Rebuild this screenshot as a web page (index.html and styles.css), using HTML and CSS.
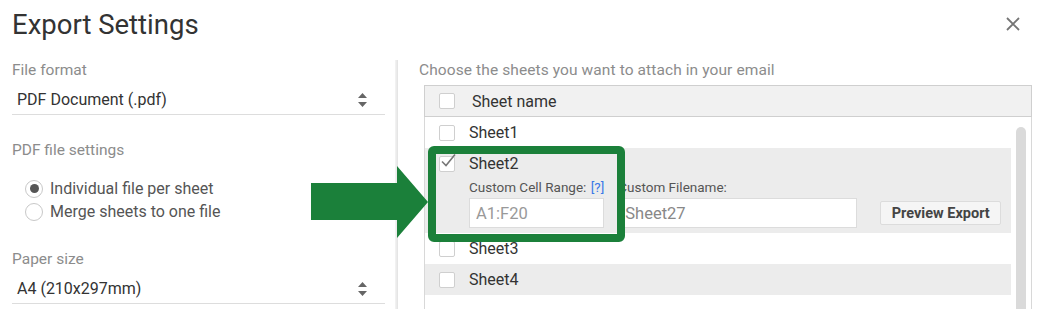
FILE: index.html
```html
<!DOCTYPE html>
<html lang="en">
<head>
    <meta charset="UTF-8">
    <title>Export Settings</title>
    <link rel="stylesheet" href="styles.css">
</head>
<body>
    <div class="dialog">
        <header class="dialog-head">
            <h1>Export Settings</h1>
            <button class="close" aria-label="Close">
                <svg width="14" height="14" viewBox="0 0 14 14"><path d="M1 1L13 13M13 1L1 13" stroke="#757575" stroke-width="1.8" fill="none"/></svg>
            </button>
        </header>

        <div class="dialog-body">
            <section class="settings">
                <div class="label">File format</div>
                <div class="select">
                    <span>PDF Document (.pdf)</span>
                    <svg class="sort" width="9" height="14" viewBox="0 0 9 14"><path d="M4.5 0L9 5H0Z M0 9H9L4.5 14Z" fill="#666"/></svg>
                </div>

                <div class="label label-gap">PDF file settings</div>
                <div class="radios">
                    <label class="radio"><span class="dot checked"></span>Individual file per sheet</label>
                    <label class="radio"><span class="dot"></span>Merge sheets to one file</label>
                </div>

                <div class="label label-paper">Paper size</div>
                <div class="select">
                    <span>A4 (210x297mm)</span>
                    <svg class="sort" width="9" height="14" viewBox="0 0 9 14"><path d="M4.5 0L9 5H0Z M0 9H9L4.5 14Z" fill="#666"/></svg>
                </div>
            </section>

            <div class="divider"></div>

            <section class="sheets">
                <div class="label">Choose the sheets you want to attach in your email</div>
                <div class="table">
                    <div class="table-head">
                        <span class="box"></span>
                        <span class="head-name">Sheet name</span>
                    </div>
                    <div class="table-body">
                        <div class="rows">
                            <div class="row">
                                <span class="box"></span><span class="name">Sheet1</span>
                            </div>
                            <div class="row open">
                                <div class="row-line">
                                    <span class="box">
                                        <svg width="16" height="14" viewBox="0 0 16 14"><path d="M2 7.5L6 11.5L15 0.5" stroke="#777" stroke-width="1.6" fill="none"/></svg>
                                    </span>
                                    <span class="name">Sheet2</span>
                                </div>
                                <div class="fields">
                                    <div class="field">
                                        <div class="field-label">Custom Cell Range: <a class="help">[?]</a></div>
                                        <input class="field-input range" type="text" value="A1:F20">
                                    </div>
                                    <div class="field">
                                        <div class="field-label">Custom Filename:</div>
                                        <input class="field-input filename" type="text" value="Sheet27">
                                    </div>
                                    <button class="preview">Preview Export</button>
                                </div>
                            </div>
                            <div class="row">
                                <span class="box"></span><span class="name">Sheet3</span>
                            </div>
                            <div class="row shaded">
                                <span class="box"></span><span class="name">Sheet4</span>
                            </div>
                        </div>
                        <div class="scroll"><div class="thumb"></div></div>
                    </div>
                </div>
            </section>
        </div>

        <svg class="arrow" width="118" height="72" viewBox="0 0 118 72">
            <path d="M0 17H86V0L117 36L86 72V54H0Z" fill="#1b803a"/>
        </svg>
        <div class="highlight"></div>
    </div>
</body>
</html>
```

FILE: styles.css
```css
* {
    margin: 0;
    padding: 0;
    box-sizing: border-box;
}

body {
    font-family: 'Roboto', 'Liberation Sans', sans-serif;
    background: #fff;
    color: #333;
    width: 1042px;
    height: 309px;
    overflow: hidden;
}

.dialog {
    position: relative;
    height: 309px;
}

.dialog-head {
    height: 60px;
    display: flex;
    justify-content: space-between;
    align-items: flex-start;
    padding: 8px 22px 0 12px;
}

.dialog-head h1 {
    font-size: 27.5px;
    font-weight: 400;
    line-height: 34px;
    color: #333;
}

.close {
    border: none;
    background: none;
    margin-top: 9px;
    width: 14px;
    height: 14px;
}

.close svg {
    display: block;
}

.dialog-body {
    display: flex;
    height: 249px;
    overflow: hidden;
}

.settings {
    width: 373px;
    margin-left: 12px;
}

.label {
    font-size: 15.5px;
    line-height: 20px;
    color: #8c8c8c;
}

.select {
    height: 35px;
    display: flex;
    align-items: center;
    justify-content: space-between;
    padding: 5px 18px 0 5px;
    border-bottom: 1px solid #ddd;
    font-size: 16px;
    color: #333;
}

.label-gap {
    margin-top: 25px;
}

.radios {
    margin-top: 17px;
    padding-left: 13px;
}

.radio {
    display: flex;
    align-items: center;
    height: 23px;
    font-size: 16px;
    color: #555;
}

.dot {
    width: 18px;
    height: 18px;
    border: 1px solid #c8c8c8;
    border-radius: 50%;
    margin-right: 7px;
    display: flex;
    align-items: center;
    justify-content: center;
}

.dot.checked::after {
    content: '';
    width: 9px;
    height: 9px;
    border-radius: 50%;
    background: #555;
}

.label-paper {
    margin-top: 26px;
}

.divider {
    width: 3px;
    margin-left: 10px;
    background: linear-gradient(90deg, #f4f4f4, #e2e2e2);
}

.sheets {
    width: 613px;
    margin-left: 21px;
}

.sheets > .label {
    letter-spacing: 0.1px;
}

.table {
    margin: 5px 0 0 5px;
}

.table-head {
    height: 32px;
    display: flex;
    align-items: center;
    padding-left: 14px;
    background: #f1f1f1;
    border: 1px solid #cfcfcf;
    font-size: 16px;
    color: #333;
}

.head-name {
    margin-left: 17px;
}

.box {
    width: 16px;
    height: 16px;
    border: 1px solid #cfcfcf;
    border-radius: 2px;
    background: #fff;
    flex-shrink: 0;
    position: relative;
}

.box svg {
    position: absolute;
    left: 0;
    top: -3px;
}

.table-body {
    display: flex;
    border-left: 1px solid #d8d8d8;
    border-right: 1px solid #d8d8d8;
    height: 200px;
}

.rows {
    width: 586px;
}

.row {
    height: 31px;
    display: flex;
    align-items: center;
    padding-left: 14px;
    font-size: 16px;
    color: #333;
}

.name {
    margin-left: 14px;
}

.row.shaded {
    background: #ececec;
}

.row.open {
    height: 85px;
    display: block;
    background: #ececec;
}

.row-line {
    height: 31px;
    display: flex;
    align-items: center;
}

.fields {
    display: flex;
    align-items: flex-end;
    padding-left: 30px;
}

.field {
    margin-right: 14px;
}

.field-label {
    font-size: 13.5px;
    line-height: 16px;
    color: #555;
    margin-bottom: 3px;
}

.help {
    color: #3b78e7;
    margin-left: 1px;
}

.field-input {
    display: block;
    height: 30px;
    border: 1px solid #dcdcdc;
    background: #fff;
    font-family: inherit;
    font-size: 16.5px;
    color: #999;
    padding: 0 6px;
    outline: none;
}

.range {
    width: 135px;
}

.filename {
    width: 239px;
    color: #888;
}

.preview {
    margin: 0 0 3px 9px;
    height: 24px;
    width: 121px;
    border: 1px solid #dcdcdc;
    border-radius: 2px;
    background: #f5f5f5;
    font-family: inherit;
    font-size: 14.5px;
    font-weight: 700;
    color: #444;
}

.scroll {
    width: 20px;
    padding: 10px 5px 0;
}

.thumb {
    height: 100%;
    background: #dadada;
    border-radius: 5px 5px 0 0;
}

.arrow {
    position: absolute;
    left: 311px;
    top: 166px;
}

.highlight {
    position: absolute;
    left: 428px;
    top: 146px;
    width: 197px;
    height: 96px;
    border: 8px solid #1b803a;
    border-radius: 6px;
}
```
